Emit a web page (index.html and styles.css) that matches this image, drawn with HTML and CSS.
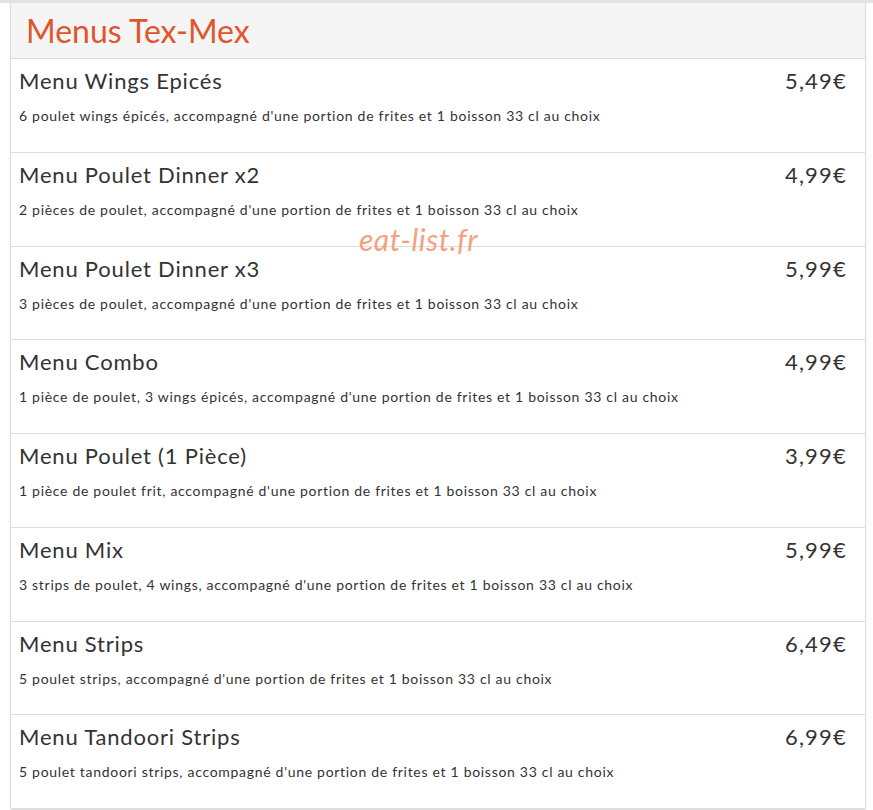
FILE: index.html
```html
<!DOCTYPE html>
<html lang="fr">
  <head>
    <meta charset="UTF-8" />
    <meta name="viewport" content="width=device-width, initial-scale=1.0" />
    <title>Menus Tex-Mex</title>
    <link rel="stylesheet" href="styles.css">
  </head>
  <body>
    <div class="panel">
      <div class="panel-heading">
        <h2>Menus Tex-Mex</h2>
      </div>
      <div class="item">
        <div class="item-top">
          <h3>Menu Wings Epicés</h3>
          <span class="price">5,49€</span>
        </div>
        <p>6 poulet wings épicés, accompagné d'une portion de frites et 1 boisson 33 cl au choix</p>
      </div>
      <div class="item">
        <div class="item-top">
          <h3>Menu Poulet Dinner x2</h3>
          <span class="price">4,99€</span>
        </div>
        <p>2 pièces de poulet, accompagné d'une portion de frites et 1 boisson 33 cl au choix</p>
      </div>
      <div class="item">
        <div class="item-top">
          <h3>Menu Poulet Dinner x3</h3>
          <span class="price">5,99€</span>
        </div>
        <p>3 pièces de poulet, accompagné d'une portion de frites et 1 boisson 33 cl au choix</p>
      </div>
      <div class="item">
        <div class="item-top">
          <h3>Menu Combo</h3>
          <span class="price">4,99€</span>
        </div>
        <p>1 pièce de poulet, 3 wings épicés, accompagné d'une portion de frites et 1 boisson 33 cl au choix</p>
      </div>
      <div class="item">
        <div class="item-top">
          <h3>Menu Poulet (1 Pièce)</h3>
          <span class="price">3,99€</span>
        </div>
        <p>1 pièce de poulet frit, accompagné d'une portion de frites et 1 boisson 33 cl au choix</p>
      </div>
      <div class="item">
        <div class="item-top">
          <h3>Menu Mix</h3>
          <span class="price">5,99€</span>
        </div>
        <p>3 strips de poulet, 4 wings, accompagné d'une portion de frites et 1 boisson 33 cl au choix</p>
      </div>
      <div class="item">
        <div class="item-top">
          <h3>Menu Strips</h3>
          <span class="price">6,49€</span>
        </div>
        <p>5 poulet strips, accompagné d'une portion de frites et 1 boisson 33 cl au choix</p>
      </div>
      <div class="item">
        <div class="item-top">
          <h3>Menu Tandoori Strips</h3>
          <span class="price">6,99€</span>
        </div>
        <p>5 poulet tandoori strips, accompagné d'une portion de frites et 1 boisson 33 cl au choix</p>
      </div>
      <!-- watermark -->
      <div class="watermark">eat-list.fr</div>
    </div>
  </body>
</html>
```

FILE: styles.css
```css
body {
  font-family: Lato, "Open Sans", sans-serif;
  color: #333;
  background-color: #fff;
  margin: 0;
  padding: 0;
  border-top: 3px solid #e3e3e3;
}
.panel {
  position: relative;
  margin: 0 7px 0 10px;
  border: 1px solid #ddd;
  border-top: none;
  border-radius: 0 0 3px 3px;
  box-shadow: 0 1px 2px rgba(0, 0, 0, 0.08);
}
.panel-heading {
  background-color: #f5f5f5;
  border-bottom: 1px solid #ddd;
  padding: 0 15px;
  height: 55px;
  display: flex;
  align-items: center;
}
.panel-heading h2 {
  margin: 0;
  font-size: 32px;
  font-weight: normal;
  color: #e0552b;
  line-height: 1.1;
}
.item {
  padding: 10px 18px 25.75px 8px;
  border-bottom: 1px solid #ddd;
}
.item:last-of-type {
  border-bottom: none;
}
.item-top {
  display: flex;
  justify-content: space-between;
}
.item h3 {
  margin: 0;
  font-size: 22px;
  font-weight: normal;
  line-height: 24px;
  letter-spacing: 0.8px;
}
.price {
  font-size: 22px;
  line-height: 24px;
  letter-spacing: 1.2px;
}
.item p {
  margin: 13px 0 0;
  font-size: 14px;
  line-height: 20px;
  letter-spacing: 0.7px;
}
.watermark {
  position: absolute;
  left: 348px;
  top: 218px;
  font-size: 30px;
  font-style: italic;
  color: #f4a27e;
  letter-spacing: 0.5px;
}
```
